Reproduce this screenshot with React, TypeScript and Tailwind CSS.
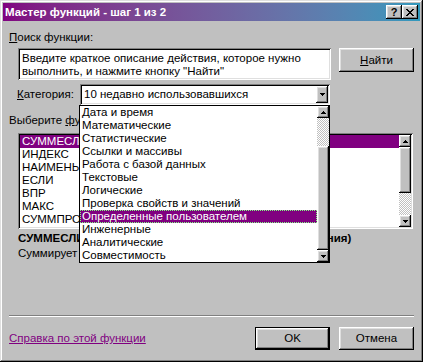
const raised =
  'shadow-[inset_-1px_-1px_0_#000,inset_1px_1px_0_#fff,inset_-2px_-2px_0_#808080,inset_2px_2px_0_#dfdfdf]';
const sunken =
  'shadow-[inset_1px_1px_0_#808080,inset_-1px_-1px_0_#fff,inset_2px_2px_0_#000,inset_-2px_-2px_0_#dfdfdf]';
const dither = 'bg-[repeating-conic-gradient(#c0c0c0_0%_25%,#ffffff_0%_50%)] bg-size-[2px_2px]';

const categories = [
  'Дата и время',
  'Математические',
  'Статистические',
  'Ссылки и массивы',
  'Работа с базой данных',
  'Текстовые',
  'Логические',
  'Проверка свойств и значений',
  'Определенные пользователем',
  'Инженерные',
  'Аналитические',
  'Совместимость',
];

const functions = ['СУММЕСЛИ', 'ИНДЕКС', 'НАИМЕНЬШИЙ', 'ЕСЛИ', 'ВПР', 'МАКС', 'СУММПРОИЗВ'];

function Tri({ up = false }: { up?: boolean }) {
  return (
    <svg width="5" height="3" viewBox="0 0 5 3" shapeRendering="crispEdges" className={up ? 'rotate-180' : ''}>
      <rect x="0" y="0" width="5" height="1" fill="#000" />
      <rect x="1" y="1" width="3" height="1" fill="#000" />
      <rect x="2" y="2" width="1" height="1" fill="#000" />
    </svg>
  );
}

function ArrowBtn({ up = false }: { up?: boolean }) {
  return (
    <div className={`flex h-[12px] w-[12px] items-center justify-center bg-[#c0c0c0] ${raised}`}>
      <Tri up={up} />
    </div>
  );
}

export default function App() {
  return (
    <div
      className="relative h-[362px] w-[423px] select-none bg-[#c0c0c0] p-[3px] text-[11.5px] leading-[13px] text-black shadow-[inset_-1px_-1px_0_#000,inset_1px_1px_0_#dfdfdf,inset_-2px_-2px_0_#808080,inset_2px_2px_0_#fff]"
      style={{ fontFamily: '"Liberation Sans", Arial, sans-serif' }}
    >
      {/* title bar */}
      <div className="flex h-[18px] items-center justify-between bg-gradient-to-r from-[#800080] to-[#3199bd] pl-[2px] pr-[2px]">
        <span className="text-[11.5px] font-bold text-white">Мастер функций - шаг 1 из 2</span>
        <div className="flex">
          <div className={`flex h-[14px] w-[16px] items-center justify-center bg-[#c0c0c0] ${raised}`}>
            <span className="text-[11px] leading-[11px] font-bold">?</span>
          </div>
          <div className={`flex h-[14px] w-[16px] items-center justify-center bg-[#c0c0c0] ${raised}`}>
            <svg width="8" height="7" viewBox="0 0 8 7" shapeRendering="crispEdges">
              <path d="M0 0h2v1h-2zM6 0h2v1h-2zM1 1h2v1h-2zM5 1h2v1h-2zM2 2h4v1h-4zM3 3h2v1h-2zM2 4h4v1h-4zM1 5h2v1h-2zM5 5h2v1h-2zM0 6h2v1h-2zM6 6h2v1h-2z" fill="#000" />
            </svg>
          </div>
        </div>
      </div>

      <div className="px-[6px]">
        <div className="mt-[10px]">
          <span className="underline">П</span>оиск функции:
        </div>

        <div className="mt-[4px] flex">
          <div className={`ml-[9px] h-[32px] w-[313px] bg-white px-[4px] pt-[4px] ${sunken}`}>
            Введите краткое описание действия, которое нужно
            <br />
            выполнить, и нажмите кнопку "Найти"
          </div>
          <div className={`ml-[8px] flex h-[24px] w-[75px] items-center justify-center ${raised}`}>
            <span>
              <span className="underline">Н</span>айти
            </span>
          </div>
        </div>

        <div className="mt-[4px] flex items-center pl-[8px]">
          <span className="w-[63px]">
            <span className="underline">К</span>атегория:
          </span>
          <div className={`relative flex h-[21px] w-[250px] items-center bg-white pl-[4px] pr-[2px] ${sunken}`}>
            <span className="flex-1">10 недавно использовавшихся</span>
            <div className={`flex h-[17px] w-[12px] items-center justify-center bg-[#c0c0c0] ${raised}`}>
              <Tri />
            </div>

            {/* open dropdown */}
            <div className="absolute left-[-1px] top-full z-10 flex w-[251px] border border-black bg-white">
              <div className="flex-1">
                {categories.map((c, i) =>
                  i === 8 ? (
                    <div
                      key={c}
                      className="h-[13px] border border-dotted border-[#80ff80] bg-[#800080] pl-[1px] leading-[11px] text-white"
                    >
                      {c}
                    </div>
                  ) : (
                    <div key={c} className="h-[13px] pl-[2px]">
                      {c}
                    </div>
                  )
                )}
              </div>
              <div className="flex w-[12px] flex-col">
                <ArrowBtn up />
                <div className={`h-[28px] ${dither}`} />
                <div className={`h-[104px] bg-[#c0c0c0] ${raised}`} />
                <ArrowBtn />
              </div>
            </div>
          </div>
        </div>

        <div className="mt-[9px]">
          Выберите <span className="underline">ф</span>ункцию:
        </div>

        <div className={`ml-[9px] mt-[6px] flex h-[96px] w-[395px] bg-white p-[2px] ${sunken}`}>
          <div className="flex-1 overflow-hidden">
            {functions.map((f, i) => (
              <div key={f} className={`h-[13px] pl-[2px] ${i === 0 ? 'bg-[#800080] text-white' : ''}`}>
                {f}
              </div>
            ))}
          </div>
          <div className="flex w-[12px] flex-col">
            <ArrowBtn up />
            <div className={`h-[46px] bg-[#c0c0c0] ${raised}`} />
            <div className={`flex-1 ${dither}`} />
            <ArrowBtn />
          </div>
        </div>

        <div className="ml-[9px] mt-[3px] whitespace-nowrap font-bold">
          СУММЕСЛИ(диапазон;критерий;диапазон_суммирования)
        </div>
        <div className="ml-[9px] mt-[2px]">Суммирует ячейки, заданные указанным условием.</div>

        <div className="mt-[55px] h-[2px] border-t border-b border-t-[#808080] border-b-white" />

        <div className="mt-[10px] flex items-center">
          <span className="flex-1 text-[#800080] underline">Справка по этой функции</span>
          <div className="flex h-[23px] w-[75px] items-center justify-center border border-black">
            <div className={`flex h-full w-full items-center justify-center ${raised}`}>OK</div>
          </div>
          <div className={`ml-[9px] flex h-[23px] w-[75px] items-center justify-center ${raised}`}>Отмена</div>
        </div>
      </div>
    </div>
  );
}
